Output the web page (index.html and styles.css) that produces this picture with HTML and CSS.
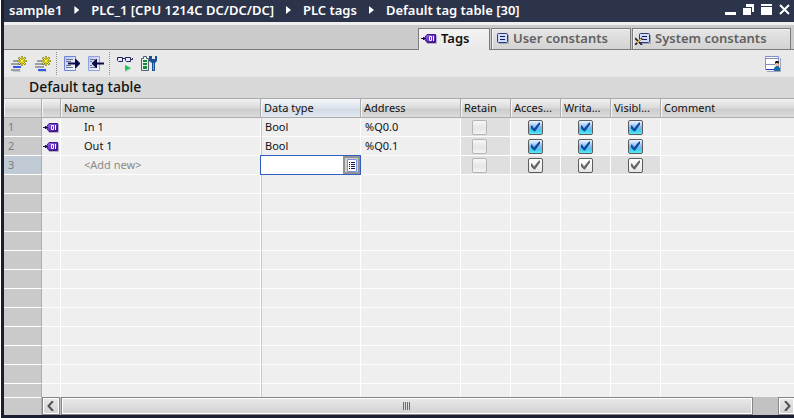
FILE: index.html
```html
<!DOCTYPE html>
<html lang="en">
<head>
<meta charset="utf-8">
<title>Default tag table</title>
<link rel="stylesheet" href="styles.css">
</head>
<body>
<svg class="defs" aria-hidden="true">
  <defs>
    <linearGradient id="purple" x1="0" y1="0" x2="1" y2="1"><stop offset="0" stop-color="#9a78e6"/><stop offset=".5" stop-color="#6a35cc"/><stop offset="1" stop-color="#35078f"/></linearGradient>
    <linearGradient id="page" x1="0" y1="0" x2="1" y2="1"><stop offset="0" stop-color="#b4c4f4"/><stop offset="1" stop-color="#ffffff"/></linearGradient>
    <symbol id="tag" viewBox="0 0 16 11">
      <path d="M6 10.500h9.500V2" fill="none" stroke="#b5b0c2"/>
      <path d="M3 5.500l3-4h8.500v8H6z" fill="url(#purple)" stroke="#43168f"/>
      <path d="M0 5.500h5M2.500 4v3" stroke="#1c0c40" fill="none"/>
      <path d="M8.500 3.500h2v4h-2zM12.500 3v5" stroke="#fff" fill="none"/>
    </symbol>
    <symbol id="constant" viewBox="0 0 12 11">
      <path d="M2 10.500h9.500V2" stroke="#a5a5ad" fill="none"/>
      <rect x=".5" y=".5" width="10" height="9" rx="1" fill="#cfdcff" stroke="#343a78"/>
      <path d="M3 3.500h5M3 6.500h5" stroke="#161a55"/>
    </symbol>
    <symbol id="star" viewBox="0 0 10 10">
      <path d="M5 0v10M0 5h10M1.500 1.500l7 7M8.500 1.500l-7 7" stroke="#77751c" stroke-width="1.800"/>
      <path d="M5 .5v9M.5 5h9M2 2l6 6M8 2l-6 6" stroke="#fff82d"/>
    </symbol>
  </defs>
</svg>
<div class="window">
  <header class="titlebar">
    <nav class="crumbs" aria-label="Path">
      <span>sample1</span><i class="arrow"></i><span>PLC_1 [CPU 1214C DC/DC/DC]</span><i class="arrow"></i><span>PLC tags</span><i class="arrow"></i><span>Default tag table [30]</span>
    </nav>
    <div class="window-buttons">
      <button aria-label="Minimize"><svg width="11" height="12"><path d="M0 8h11v3H0z" fill="#fff"/></svg></button>
      <button aria-label="Restore"><svg width="11" height="12"><path d="M0 4h8v7H0zM3 0h8v8H9V3H3z" fill="#fff"/></svg></button>
      <button aria-label="Maximize"><svg width="11" height="12"><path d="M0 0h11v2H0zM0 3h11v8H0z" fill="#fff"/></svg></button>
      <button aria-label="Close"><svg width="11" height="12"><path d="M1 1l9 9M10 1l-9 9" stroke="#fff" stroke-width="2"/></svg></button>
    </div>
  </header>

  <div class="tabs" role="tablist">
    <button class="tab tab-tags active" role="tab" aria-selected="true"><svg width="16" height="11"><use href="#tag"/></svg>Tags</button>
    <button class="tab tab-user" role="tab"><svg width="12" height="11"><use href="#constant"/></svg>User constants</button>
    <button class="tab tab-system" role="tab"><svg width="16" height="13"><use href="#constant" x="4" y="1" width="12" height="11"/><path d="M0 6l7 7M7 6l-7 7" stroke="#17172e" stroke-width="1.600"/><path d="M2 11l4-4" stroke="#f2c94a" stroke-width="1.600"/></svg>System constants</button>
  </div>

  <div class="toolbar">
    <div class="group">
      <button aria-label="Insert row"><svg width="16" height="16"><path d="M2 4h6v2H2zM0 7h10v2H0zM0 13h9v2H0z" fill="#9a9fa6"/><path d="M2 10h8v2H2z" fill="#3155e8"/><path d="M2 15.500h8" stroke="#c5c8cc"/><use href="#star" x="6" y="0" width="10" height="10"/></svg></button>
      <button aria-label="Add row"><svg width="16" height="16"><path d="M2 4h6v2H2zM0 7h10v2H0zM0 10h9v2H0z" fill="#9a9fa6"/><path d="M3 13h8v2H3z" fill="#3155e8"/><path d="M4 15.500h8" stroke="#c5c8cc"/><use href="#star" x="6" y="0" width="10" height="10"/></svg></button>
    </div>
    <div class="group">
      <button aria-label="Export"><svg width="16" height="16"><path d="M.5.500h11v14H.5z" fill="url(#page)" stroke="#6f83d6"/><path d="M2 3.500h7M2 5.500h5M2 9.500h5M2 11.500h7" stroke="#6b7488"/><path d="M4 7.500h8" stroke="#0b0b48" stroke-width="2"/><path d="M11 3h1l4 4v1l-4 4h-1z" fill="#0b0b48"/></svg></button>
      <button aria-label="Import"><svg width="16" height="16"><path d="M.5.500h11v14H.5z" fill="url(#page)" stroke="#8e9ee0"/><path d="M2 3.500h5M2 5.500h2M2 9.500h2M2 11.500h6" stroke="#6b7488"/><path d="M16 7.500H8" stroke="#0b0b48" stroke-width="2"/><path d="M9 3v9H8L4 8V7l4-4z" fill="#0b0b48"/></svg></button>
    </div>
    <div class="group">
      <button aria-label="Monitor all"><svg width="16" height="16"><path d="M.5 1.500h5v4h-4l-1-1zM8.500 1.500h5v4h-4l-1-1zM6 2.500h2M14 3.500h1.500V2" fill="#e8ebff" stroke="#23245c"/><path d="M8 9l6 3-6 3z" fill="#1fc45c"/><path d="M8 15.500l6-3" stroke="#a7c9b3"/></svg></button>
      <button aria-label="Configure"><svg width="16" height="16"><path d="M2.500.500h3v2h2v12H.5v-12h2z" fill="#e8f5e8" stroke="#506079"/><path d="M2 4h4v2H2zM2 7h4v2H2zM2 10h4v3H2z" fill="#138b38"/><path d="M8 0v5l3 2v8h3V7l2-2V0h-2v3h-3V0z" fill="#1c5193"/><path d="M12.500 7v7" stroke="#6fa1d7"/></svg></button>
    </div>
    <button class="user" aria-label="User layout"><svg width="16" height="16"><path d="M2 15.500h13.500V2" stroke="#9fa5b5" fill="none"/><path d="M.5.500h13v13H.5z" fill="#fff" stroke="#7e91d8"/><path d="M1 2.500h12M1 8.500h9" stroke="#8290b4"/><path d="M1 13.500h9" stroke="#2438c8"/><path d="M9 15v-3l2-2h2l2 2v3z" fill="#176da8"/><circle cx="12" cy="8" r="2" fill="#edbd82"/><path d="M10 8V6l1-1h2l1 1v2l-1-1h-2z" fill="#16120e"/></svg></button>
  </div>

  <h1>Default tag table</h1>

  <main class="grid">
    <table>
      <colgroup><col class="c-num"><col class="c-icon"><col class="c-name"><col class="c-text"><col class="c-text"><col class="c-flag"><col class="c-flag"><col class="c-flag"><col class="c-flag"><col></colgroup>
      <thead><tr><th></th><th></th><th>Name</th><th class="current">Data type</th><th>Address</th><th>Retain</th><th>Acces...</th><th>Writa...</th><th>Visibl...</th><th>Comment</th></tr></thead>
      <tbody>
        <tr><th>1</th><td><svg width="16" height="11"><use href="#tag"/></svg></td><td class="name">In 1</td><td>Bool</td><td>%Q0.0</td><td class="off"><input type="checkbox" disabled aria-label="Retain"></td><td class="flag"><input type="checkbox" checked aria-label="Accessible"></td><td class="flag"><input type="checkbox" checked aria-label="Writable"></td><td class="flag"><input type="checkbox" checked aria-label="Visible"></td><td></td></tr>
        <tr><th>2</th><td><svg width="16" height="11"><use href="#tag"/></svg></td><td class="name">Out 1</td><td>Bool</td><td>%Q0.1</td><td class="off"><input type="checkbox" disabled aria-label="Retain"></td><td class="flag"><input type="checkbox" checked aria-label="Accessible"></td><td class="flag"><input type="checkbox" checked aria-label="Writable"></td><td class="flag"><input type="checkbox" checked aria-label="Visible"></td><td></td></tr>
        <tr class="new"><th>3</th><td></td><td class="name">&lt;Add new&gt;</td><td class="edit"><div class="editor"><input type="text" aria-label="Data type"><button aria-label="Choose data type"><svg width="10" height="13"><path d="M.5.500h9v12h-9z" fill="#fff" stroke="#7d93e0"/><path d="M2 3.500h1M4 3.500h4M2 5.500h1M4 5.500h4M2 7.500h1M4 7.500h4M2 9.500h1M4 9.500h4" stroke="#15154c"/></svg></button></div></td><td></td><td class="off"><input type="checkbox" disabled aria-label="Retain"></td><td class="off"><input type="checkbox" checked disabled aria-label="Accessible"></td><td class="off"><input type="checkbox" checked disabled aria-label="Writable"></td><td class="off"><input type="checkbox" checked disabled aria-label="Visible"></td><td></td></tr>
        <tr><th></th><td></td><td></td><td></td><td></td><td></td><td></td><td></td><td></td><td></td></tr>
        <tr><th></th><td></td><td></td><td></td><td></td><td></td><td></td><td></td><td></td><td></td></tr>
        <tr><th></th><td></td><td></td><td></td><td></td><td></td><td></td><td></td><td></td><td></td></tr>
        <tr><th></th><td></td><td></td><td></td><td></td><td></td><td></td><td></td><td></td><td></td></tr>
        <tr><th></th><td></td><td></td><td></td><td></td><td></td><td></td><td></td><td></td><td></td></tr>
        <tr><th></th><td></td><td></td><td></td><td></td><td></td><td></td><td></td><td></td><td></td></tr>
        <tr><th></th><td></td><td></td><td></td><td></td><td></td><td></td><td></td><td></td><td></td></tr>
        <tr><th></th><td></td><td></td><td></td><td></td><td></td><td></td><td></td><td></td><td></td></tr>
        <tr><th></th><td></td><td></td><td></td><td></td><td></td><td></td><td></td><td></td><td></td></tr>
        <tr><th></th><td></td><td></td><td></td><td></td><td></td><td></td><td></td><td></td><td></td></tr>
        <tr><th></th><td></td><td></td><td></td><td></td><td></td><td></td><td></td><td></td><td></td></tr>
        <tr><th></th><td></td><td></td><td></td><td></td><td></td><td></td><td></td><td></td><td></td></tr>
      </tbody>
    </table>
  </main>

  <footer class="scroll">
    <div class="corner"></div>
    <button class="step" aria-label="Scroll left"><svg width="8" height="10"><path d="M6 0L1.500 5 6 10" stroke="#505050" stroke-width="2" fill="none"/></svg></button>
    <div class="track"><div class="thumb"><svg width="8" height="8"><path d="M.5 0v8M2.500 0v8M4.500 0v8M6.500 0v8" stroke="#6b6b6b"/></svg></div></div>
    <button class="step" aria-label="Scroll right"><svg width="8" height="10"><path d="M2 0l4.500 5L2 10" stroke="#505050" stroke-width="2" fill="none"/></svg></button>
  </footer>
</div>
</body>
</html>
```
FILE: styles.css
```css
* { box-sizing: border-box; }
body { margin: 0; font-family: "Noto Sans", "Open Sans", sans-serif; font-size: 11px; color: #111; }
button { margin: 0; padding: 0; border: 0; background: none; font: inherit; color: inherit; display: flex; align-items: center; }
svg { display: block; flex: none; }
.defs { position: absolute; width: 0; height: 0; }

.window { display: flex; flex-direction: column; height: 100vh; border-left: 3px solid #1a2030; border-bottom: 3px solid #1a2030; margin-left: 1px; background: #efefef; overflow: hidden; }

.titlebar { display: flex; flex: none; justify-content: space-between; height: 22px; margin-left: -3px; padding: 0 4px 0 8px; background: #2c344b; color: #fff; }
.crumbs { display: flex; align-items: center; height: 20px; font-size: 13px; font-weight: 600; white-space: nowrap; }
.arrow { width: 5px; height: 8px; margin: 0 12px; background: #fff; clip-path: polygon(0 0, 100% 50%, 0 100%); }
.window-buttons { display: flex; gap: 7px; padding-top: 4px; align-items: flex-start; }

.tabs { display: flex; flex: none; justify-content: flex-end; align-items: flex-end; gap: 1px; height: 28px; padding-right: 3px; border-top: 3px solid #efefef; border-bottom: 1px solid #7b7b7b; background: #cbcbcb; }
.tab { height: 21px; gap: 4px; border: 1px solid #7b7b7b; border-bottom: 0; background: linear-gradient(#e6e6e6, #d3d3d3); box-shadow: inset 1px 1px #f3f3f3; font-size: 13px; font-weight: 600; line-height: 18px; color: #616161; white-space: nowrap; padding-bottom: 2px; }
.tab.active { height: 22px; margin-bottom: -1px; padding-bottom: 3px; background: linear-gradient(#f3f3f3, #e9e9e9); color: #111; }
.tab-tags { width: 72px; padding-left: 2px; }
.tab-user { width: 140px; padding-left: 5px; }
.tab-system { width: 159px; padding-left: 2px; }

.toolbar { display: flex; flex: none; align-items: center; height: 27px; padding: 0 13px 0 0; background: #e9e9e9; }
.group { display: flex; align-items: center; gap: 8px; height: 23px; padding: 0 5px 0 7px; border-right: 1px dotted #8c8c8c; }
.group:nth-child(3) { border-right: 0; }
.user { margin-left: auto; }

h1 { flex: none; margin: 0; height: 21px; padding-left: 25px; background: #d8d8d8; font-size: 14px; font-weight: 500; line-height: 20px; }

.grid { flex: 1; min-height: 0; overflow: hidden; background: #efefef; }
table { width: 100%; table-layout: fixed; border-collapse: separate; border-spacing: 0; }
.c-num { width: 38px; }
.c-icon { width: 19px; }
.c-name { width: 200px; }
.c-text { width: 100px; }
.c-flag { width: 50px; }
th, td { height: 19px; padding: 0 0 0 4px; overflow: hidden; text-align: left; font-weight: 400; line-height: 18px; white-space: nowrap; }
thead th { height: 20px; padding-left: 3px; border-top: 1px solid #a9a9a9; border-right: 1px solid #adadad; border-bottom: 1px solid #adadad; background: linear-gradient(#f1f1f1, #d9d9d9 52%, #cbcbcb 54%, #dcdcdc); box-shadow: inset 1px 0 #f4f4f4; }
thead .current { background: linear-gradient(#f4f7fa, #dce3ec 52%, #d2dae5 54%, #e1e8f0); }
thead th:last-child { border-right: 0; }
tbody td { border-right: 1px solid #fff; border-bottom: 1px solid #fff; }
tbody td:last-child { border-right: 0; }
tbody td:nth-child(4) { padding-left: 3px; border-left: 1px solid #c8c8c8; }
tbody th { border-right: 1px solid #adadad; border-bottom: 1px solid #fff; background: #cacaca; color: #7c7c7c; }
tbody .new th { background: #bfcad5; }
.new .name { color: #8a8a8a; }
tbody td.name { padding-left: 23px; }
tbody td:nth-child(2) { padding-left: 1px; }
td.flag, td.off { padding-left: 11px; }
td.off { background: #dfdfdf; }
td:nth-child(n+7) input[type="checkbox"] { margin-left: 6px; }

input[type="checkbox"] { appearance: none; display: block; width: 15px; height: 15px; margin: 0; border: 1px solid #b5b5b5; border-radius: 2px; background: linear-gradient(#f7f7f7, #e6e6e6 55%, #f4f4f4); }
input[type="checkbox"]:checked { border-color: #5c5c5c; background: linear-gradient(#f0f7ff, #86b4f0 50%, #43cdf0 75%, #5fe9f8); }
input[type="checkbox"]:checked:disabled { background: linear-gradient(#fff, #e5e5e5); }
input[type="checkbox"]:checked::before { content: ""; display: block; width: 13px; height: 13px; background: #084c9e; clip-path: polygon(2px 5px, 3px 5px, 5px 8px, 10px 2px, 11px 2px, 11px 4px, 6px 11px, 5px 11px, 2px 8px); }
input[type="checkbox"]:checked:disabled::before { background: #666; }

tbody td.edit { padding: 0; overflow: visible; }
.editor { display: flex; height: 20px; margin: -1px -1px -1px -2px; border: 1px solid #2f5fc4; background: #fff; position: relative; }
.editor input { flex: 1; min-width: 0; padding: 0 3px; border: 0; outline: 0; background: none; font: inherit; }
.editor button { width: 17px; justify-content: center; border: 2px solid #929292; background: #d0d0d0; }

.scroll { display: flex; flex: none; height: 18px; background: #c2c2c2; }
.corner { width: 38px; border-top: 1px solid #fff; border-right: 1px solid #adadad; background: #cacaca; }
.step, .thumb { display: flex; align-items: center; justify-content: center; border: 1px solid #868686; background: linear-gradient(#e9e9e9, #d2d2d2); box-shadow: inset 0 0 0 1px #fff; }
.step { flex: none; width: 18px; }
.step:last-child { width: 16px; border-right: 0; }
.track { flex: 1; padding: 0 25px 0 1px; display: flex; }
.thumb { flex: 1; }
```
